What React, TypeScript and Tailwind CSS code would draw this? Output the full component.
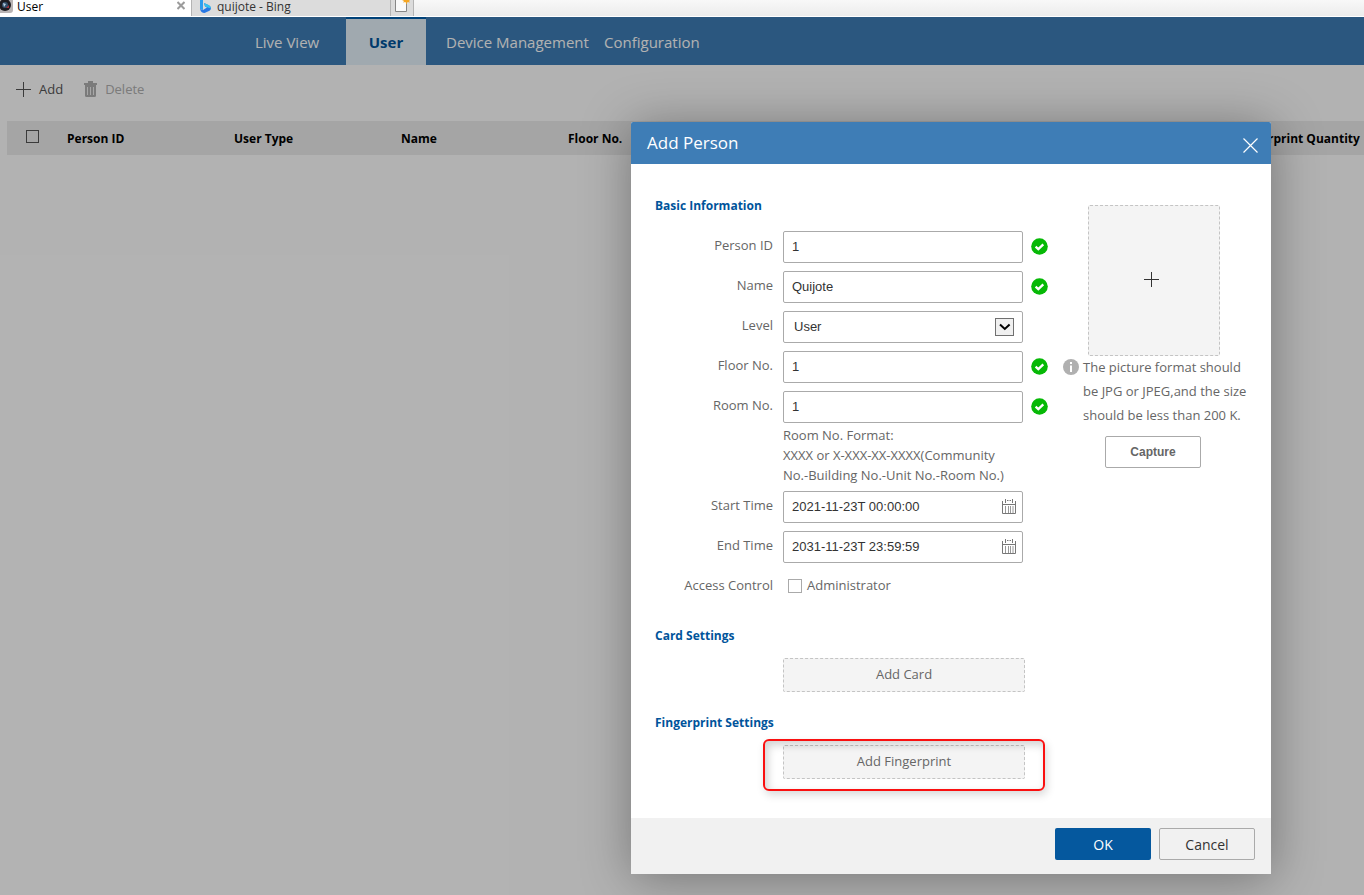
import { useState } from "react";
import type { ReactNode } from "react";

interface FieldProps {
  id: string;
  label: string;
  valid?: boolean;
  children: ReactNode;
}

const inputClass =
  "w-full h-8 px-2 pb-0.5 text-[13px] text-[#333] bg-white border border-[#aaa] rounded-[2px] outline-none font-['Liberation_Sans',sans-serif]";

const CheckIcon = () => (
  <svg width="17" height="17" viewBox="0 0 17 17" className="mt-[7px] -mr-px shrink-0">
    <circle cx="8.5" cy="8.5" r="8.3" fill="#06b906" />
    <path d="M4.6 8.6l2.7 2.5 5-4.800" fill="none" stroke="#fff" strokeWidth="2.300" />
  </svg>
);

const InfoIcon = () => (
  <svg width="16" height="16" viewBox="0 0 16 16" className="mt-1 shrink-0">
    <circle cx="8" cy="8" r="8" fill="#b0b0b0" />
    <path d="M7 3h2v2H7zM7 6.5h2V13H7z" fill="#fff" />
  </svg>
);

const PlusIcon = () => (
  <svg width="15" height="15" viewBox="0 0 15 15">
    <path d="M7.5 0v15M0 7.5h15" stroke="currentColor" />
  </svg>
);

const TrashIcon = () => (
  <svg width="13" height="16" viewBox="0 0 13 16">
    <path d="M0 3V2h4V0h5v2h4v2H0z" fill="currentColor" />
    <path d="M1 4h11v10.500q0 1.500-1.500 1.500h-8Q1 16 1 14.500z" fill="currentColor" />
    <path d="M3.500 6v8M6.500 6v8M9.500 6v8" stroke="#f0f0f0" />
  </svg>
);

const CalendarIcon = () => (
  <svg
    width="14"
    height="15"
    viewBox="0 0 14 15"
    fill="none"
    stroke="#777"
    className="absolute right-[7px] top-2 pointer-events-none"
  >
    <path d="M.5 2v12.500h13V2M0 5.500h14M3.500 0v4M10.500 0v4M5 1.500h1.500M7.500 1.500h1.500" />
    <path d="M3.500 7v7M6.500 7v7M8.500 7v7M11 7v7" stroke="#999" />
  </svg>
);

const Field = ({ id, label, valid, children }: FieldProps) => (
  <div className="flex items-start mb-2">
    <label htmlFor={id} className="w-[118px] mr-2.5 leading-7 text-right">
      {label}
    </label>
    <div className="relative w-60 h-8 mr-2">{children}</div>
    {valid && <CheckIcon />}
  </div>
);

const BrowserTabs = () => (
  <div className="flex items-stretch h-[17px] border-b border-white bg-linear-to-b from-[#f8f8f8] to-[#ececec] text-[12px] leading-[14px] text-black">
    <div className="flex w-[191px] bg-white">
      <svg width="13" height="13" viewBox="0 0 13 13">
        <path d="M0 0h13v10q0 3-3 3H0z" fill="#b9b4b4" />
        <circle cx="5" cy="5" r="6" fill="#1c1c20" />
        <circle cx="5" cy="5" r="3" fill="#33506a" />
        <path d="M3 3l3 1-2 3z" fill="#b8cfe0" />
        <path d="M6 8l3-3v3z" fill="#a3333c" />
      </svg>
      <span className="ml-1">User</span>
      <button aria-label="Close tab" className="flex items-start pt-px ml-auto mr-1.5 text-[#9c9c9c]">
        <svg width="8" height="9" viewBox="0 0 8 9">
          <path d="M.5 1l7 7M7.500 1l-7 7" stroke="currentColor" strokeWidth="2" />
        </svg>
      </button>
    </div>
    <div className="flex w-[200px] pl-2 bg-[#dcdcdc] border-x border-[#b4b4b4] text-[#333]">
      <svg width="11" height="13" viewBox="0 0 11 13">
        <path d="M0 0h3v10L0 9z" fill="#2f9ff0" />
        <path d="M0 9l3 1 4-2.500-2-1L4 3l5 2.200q2 1.300 2 3.300-.2 1.500-1.500 2.300L4.500 13Q1 13 0 9z" fill="#2878e4" />
        <path d="M4 3l5 2.200q2 1.300 2 3.300L7 7.300l-2-.8z" fill="#35c3ee" />
      </svg>
      <span className="ml-1.5">quijote - Bing</span>
    </div>
    <button
      aria-label="New tab"
      className="flex items-start w-[23px] pl-1 bg-[#dcdcdc] border-r border-[#b4b4b4]"
    >
      <svg width="16" height="13" viewBox="0 0 16 13">
        <path d="M.5 0v11.500h11V0" fill="#fafafa" stroke="#888" />
        <path d="M7 0h8l-1 1 1 1.500-2.500-.5-1 2.500-1-2.500L8 2.500 9 1z" fill="#f5a623" />
      </svg>
    </button>
  </div>
);

const TopNav = () => (
  <nav className="flex items-center h-12 pl-[255px] bg-[#3e7db6] text-[15px] text-white whitespace-nowrap">
    <a href="#live" className="w-[91px] pt-0.5">
      Live View
    </a>
    <a
      href="#user"
      className="flex items-center justify-center w-20 h-12 mr-5 bg-[#e5f3fb] border-t-2 border-[#005fae] font-bold text-[#00549b]"
    >
      User
    </a>
    <a href="#device" className="w-[158px] pt-0.5">
      Device Management
    </a>
    <a href="#config" className="pt-0.5">
      Configuration
    </a>
  </nav>
);

const UserTable = () => (
  <table className="w-full table-fixed text-[12px] font-bold text-black">
    <thead>
      <tr className="h-[34px] bg-[#ededed] text-left whitespace-nowrap">
        <th className="w-[60px] pl-[19px]">
          <input
            type="checkbox"
            aria-label="Select all"
            className="block w-[13px] h-[13px] mb-1 appearance-none border border-[#555]"
          />
        </th>
        <th className="w-[167px] pt-0.5">Person ID</th>
        <th className="w-[167px] pt-0.5">User Type</th>
        <th className="w-[167px] pt-0.5">Name</th>
        <th className="w-[668px] pt-0.5">Floor No.</th>
        <th className="pt-0.5">Fingerprint Quantity</th>
      </tr>
    </thead>
  </table>
);

const AddPersonDialog = () => {
  const [personId, setPersonId] = useState<string>("1");
  const [name, setName] = useState<string>("Quijote");
  const [floor, setFloor] = useState<string>("1");
  const [room, setRoom] = useState<string>("1");
  const [startTime, setStartTime] = useState<string>("2021-11-23T 00:00:00");
  const [endTime, setEndTime] = useState<string>("2031-11-23T 23:59:59");

  return (
    <div
      role="dialog"
      aria-labelledby="dialog-title"
      className="w-[640px] max-w-full rounded-t-[2px] bg-white shadow-[1px_4px_50px_rgba(0,0,0,0.35)] text-[13px] text-[#666]"
    >
      <header className="flex items-center justify-between h-[42px] pl-4 pr-[13px] rounded-t-[2px] bg-[#3e7db6] text-white">
        <h2 id="dialog-title" className="text-[17px]">
          Add Person
        </h2>
        <button aria-label="Close" className="mt-1">
          <svg width="15" height="15" viewBox="0 0 15 15">
            <path d="M.5.5l14 14M14.500.5l-14 14" stroke="currentColor" strokeWidth="1.200" />
          </svg>
        </button>
      </header>

      <div className="flex gap-4 px-6 pt-8 pb-[39px]">
        <div className="w-[392px] shrink-0">
          <h3 className="mb-[15px] text-[12px] leading-5 font-bold text-[#00549b]">Basic Information</h3>
          <Field id="personId" label="Person ID" valid>
            <input
              id="personId"
              type="text"
              value={personId}
              onChange={(e) => setPersonId(e.target.value)}
              className={inputClass}
            />
          </Field>
          <Field id="name" label="Name" valid>
            <input
              id="name"
              type="text"
              value={name}
              onChange={(e) => setName(e.target.value)}
              className={inputClass}
            />
          </Field>
          <Field id="level" label="Level">
            <select
              id="level"
              className="w-full h-8 px-2.5 appearance-none text-[13px] text-[#333] bg-white border border-[#aaa] rounded-[2px] outline-none font-['Liberation_Sans',sans-serif]"
            >
              <option>User</option>
            </select>
            <svg
              width="19"
              height="18"
              viewBox="0 0 19 18"
              className="absolute right-[9px] top-[7px] pointer-events-none"
            >
              <rect x=".5" y=".5" width="18" height="17" fill="#f0f0f0" stroke="#707070" />
              <path d="M5 6.500l4.800 4.500L14.600 6.500" fill="none" stroke="#000" strokeWidth="2" />
            </svg>
          </Field>
          <Field id="floor" label="Floor No." valid>
            <input
              id="floor"
              type="text"
              value={floor}
              onChange={(e) => setFloor(e.target.value)}
              className={inputClass}
            />
          </Field>
          <Field id="room" label="Room No." valid>
            <input
              id="room"
              type="text"
              value={room}
              onChange={(e) => setRoom(e.target.value)}
              className={inputClass}
            />
          </Field>
          <p className="-mt-1.5 mb-1.5 pl-32 leading-5">
            Room No. Format:
            <br />
            XXXX or X-XXX-XX-XXXX(Community
            <br />
            No.-Building No.-Unit No.-Room No.)
          </p>
          <Field id="startTime" label="Start Time">
            <input
              id="startTime"
              type="text"
              value={startTime}
              onChange={(e) => setStartTime(e.target.value)}
              className={inputClass}
            />
            <CalendarIcon />
          </Field>
          <Field id="endTime" label="End Time">
            <input
              id="endTime"
              type="text"
              value={endTime}
              onChange={(e) => setEndTime(e.target.value)}
              className={inputClass}
            />
            <CalendarIcon />
          </Field>
          <Field id="administrator" label="Access Control">
            <div className="flex items-center pl-[5px]">
              <input
                id="administrator"
                type="checkbox"
                className="w-3.5 h-3.5 mt-0.5 mr-[5px] appearance-none bg-white border border-[#aaa]"
              />
              <label htmlFor="administrator" className="leading-7">
                Administrator
              </label>
            </div>
          </Field>

          <h3 className="mt-[23px] mb-3 text-[12px] leading-5 font-bold text-[#00549b]">
            Card Settings
          </h3>
          <button className="block w-[242px] h-[34px] ml-32 bg-[#f4f4f4] border border-dashed border-[#c4c4c4] rounded-[2px]">
            Add Card
          </button>

          <h3 className="mt-[21px] mb-3 text-[12px] leading-5 font-bold text-[#00549b]">
            Fingerprint Settings
          </h3>
          <div className="relative w-[242px] ml-32">
            <button className="block w-full h-[34px] bg-[#f4f4f4] border border-dashed border-[#c4c4c4] rounded-[2px]">
              Add Fingerprint
            </button>
            <div className="absolute -left-5 -right-5 -top-1.5 -bottom-3 border-2 border-[#fa1010] rounded-md pointer-events-none shadow-[2px_4px_8px_rgba(0,0,0,0.15),inset_3px_4px_8px_rgba(0,0,0,0.18)]" />
          </div>
        </div>

        <div className="mt-[9px]">
          <button
            aria-label="Add picture"
            className="flex items-center justify-center w-[132px] h-[151px] ml-[25px] pr-1.5 pb-0.5 bg-[#f4f4f4] border border-dashed border-[#c4c4c4] rounded-[2px] text-[#333]"
          >
            <PlusIcon />
          </button>
          <div className="flex gap-1 -mt-px leading-6 whitespace-nowrap">
            <InfoIcon />
            <p>
              The picture format should
              <br />
              be JPG or JPEG,and the size
              <br />
              should be less than 200 K.
            </p>
          </div>
          <button className="w-24 h-8 mt-[9px] ml-[42px] bg-white border border-[#aaa] rounded-[2px] text-[12px] font-bold font-['Liberation_Sans',sans-serif]">
            Capture
          </button>
        </div>
      </div>

      <footer className="flex items-start justify-end gap-2 h-14 pt-2.5 pr-4 bg-[#f1f1f1] text-[14px]">
        <button className="w-24 h-8 rounded-[2px] bg-[#05589e] text-white">OK</button>
        <button className="w-24 h-8 rounded-[2px] border border-[#aaa] text-[#333]">Cancel</button>
      </footer>
    </div>
  );
};

const App = () => (
  <div className="flex flex-col min-h-screen overflow-hidden bg-white font-['Open_Sans','Noto_Sans',sans-serif]">
    <BrowserTabs />
    <main className="relative flex-1">
      <TopNav />
      <div className="flex items-center h-12 mb-2 pl-4 text-[13px] text-[#555]">
        <button className="flex items-center gap-2 mr-[21px]">
          <PlusIcon />
          <span className="pt-0.5">Add</span>
        </button>
        <button disabled className="flex items-center gap-2 text-[#b0b0b0]">
          <TrashIcon />
          <span className="pt-0.5">Delete</span>
        </button>
      </div>
      <div className="pl-[7px]">
        <UserTable />
      </div>
      <div className="absolute inset-0 flex items-start justify-end pt-[105px] pr-[93px] bg-black/30">
        <AddPersonDialog />
      </div>
    </main>
  </div>
);

export default App;
